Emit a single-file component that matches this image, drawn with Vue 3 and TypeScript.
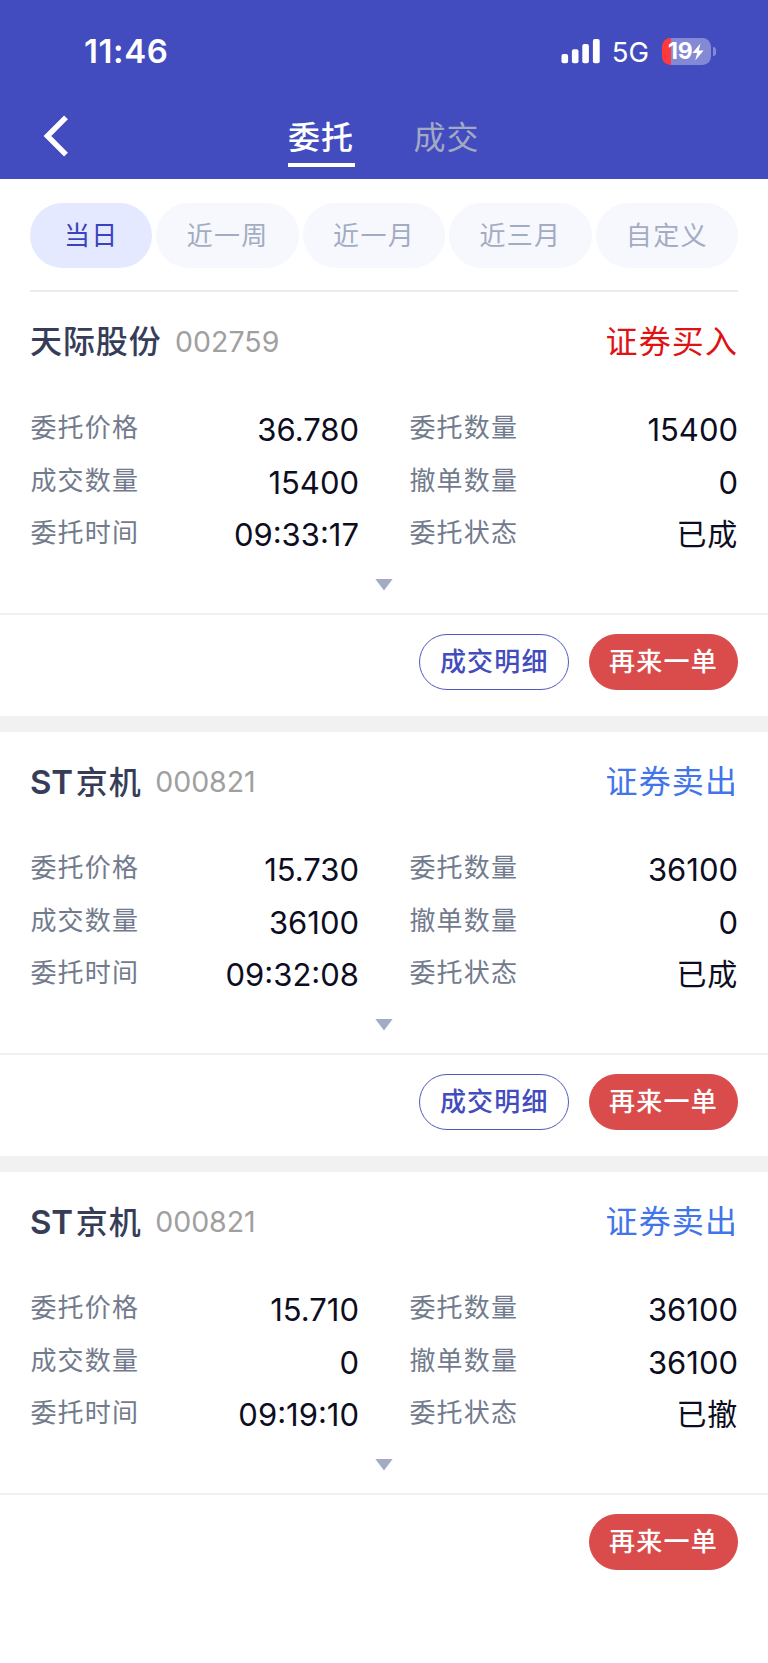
<script setup lang="ts">
interface Field {
  label: string
  value: string
}

interface Order {
  prefix: string
  name: string
  code: string
  side: 'buy' | 'sell'
  sideText: string
  fields: Field[]
  hasDetail: boolean
}

const ranges: string[] = ['当日', '近一周', '近一月', '近三月', '自定义']

function fields(price: string, amount: string, filled: string, cancelled: string, time: string, status: string): Field[] {
  return [
    { label: '委托价格', value: price },
    { label: '委托数量', value: amount },
    { label: '成交数量', value: filled },
    { label: '撤单数量', value: cancelled },
    { label: '委托时间', value: time },
    { label: '委托状态', value: status },
  ]
}

const orders: Order[] = [
  {
    prefix: '',
    name: '天际股份',
    code: '002759',
    side: 'buy',
    sideText: '证券买入',
    fields: fields('36.780', '15400', '15400', '0', '09:33:17', '已成'),
    hasDetail: true,
  },
  {
    prefix: 'ST',
    name: '京机',
    code: '000821',
    side: 'sell',
    sideText: '证券卖出',
    fields: fields('15.730', '36100', '36100', '0', '09:32:08', '已成'),
    hasDetail: true,
  },
  {
    prefix: 'ST',
    name: '京机',
    code: '000821',
    side: 'sell',
    sideText: '证券卖出',
    fields: fields('15.710', '36100', '0', '36100', '09:19:10', '已撤'),
    hasDetail: false,
  },
]
</script>

<template>
  <div class="page">
    <header class="top">
      <div class="status">
        <span class="clock">11:46</span>
        <div class="indicators">
          <svg class="signal" width="39" height="25" viewBox="0 0 39 25" fill="#fff">
            <rect x="0.5" y="15" width="6.6" height="9.3" rx="2" />
            <rect x="10.9" y="10.3" width="6.6" height="14" rx="2" />
            <rect x="21.3" y="5" width="6.6" height="19.3" rx="2" />
            <rect x="31.9" y="0" width="6.8" height="24.3" rx="2" />
          </svg>
          <span class="network">5G</span>
          <div class="battery">
            <div class="cell">
              <span class="level">19</span>
              <svg class="bolt" width="12" height="18" viewBox="0 0 12 18" fill="#fff">
                <path d="M8.5 0.5 L0.4 10 L5.2 10 L3.2 17.5 L11.6 7.6 L6.7 7.6 Z" />
              </svg>
            </div>
            <i class="cap"></i>
          </div>
        </div>
      </div>
      <nav class="nav">
        <svg class="back" width="26" height="42" viewBox="0 0 26 42" fill="none" stroke="#fff" stroke-width="5.4">
          <path d="M23 2.4 L4.4 21 L23 39.6" />
        </svg>
        <div class="tabs">
          <span class="tab active">委托</span>
          <span class="tab">成交</span>
        </div>
      </nav>
    </header>

    <div class="ranges">
      <span v-for="(r, i) in ranges" :key="r" class="range" :class="{ on: i === 0 }">{{ r }}</span>
    </div>

    <section v-for="(o, i) in orders" :key="i" class="order">
      <div class="head">
        <span class="name"><b v-if="o.prefix" class="prefix">{{ o.prefix }}</b>{{ o.name }}</span>
        <span class="code">{{ o.code }}</span>
        <span class="side" :class="o.side">{{ o.sideText }}</span>
      </div>
      <div class="grid">
        <div v-for="f in o.fields" :key="f.label" class="field">
          <span class="label">{{ f.label }}</span>
          <span class="value" :class="{ text: f.label === '委托状态' }">{{ f.value }}</span>
        </div>
      </div>
      <div class="more">
        <svg width="18" height="12" viewBox="0 0 18 12"><path d="M0.3 0 H17.7 L9 11.6 Z" fill="#a2acc2" /></svg>
      </div>
      <div class="actions">
        <button v-if="o.hasDetail" class="btn outline">成交明细</button>
        <button class="btn solid">再来一单</button>
      </div>
    </section>
  </div>
</template>

<style>
body {
  margin: 0;
  background: #fff;
}
</style>

<style scoped>
.page {
  width: 768px;
  height: 1663px;
  overflow: hidden;
  background: #fff;
  font-family: Inter, "Noto Sans CJK SC", sans-serif;
}
.top {
  height: 179px;
  background: #434cbe;
  color: #fff;
  box-sizing: border-box;
  padding-top: 30px;
}
.status {
  height: 43px;
  display: flex;
  justify-content: space-between;
  align-items: center;
  padding: 0 52px 0 84px;
}
.clock {
  font-size: 33px;
  font-weight: 600;
  line-height: 43px;
  letter-spacing: 0.6px;
}
.indicators {
  display: flex;
  align-items: center;
}
.network {
  font-size: 27.5px;
  line-height: 43px;
  margin: 2px 0 0 12px;
}
.battery {
  display: flex;
  align-items: center;
  gap: 2px;
  margin-left: 13px;
}
.cell {
  width: 49px;
  height: 27px;
  border-radius: 8.5px;
  background: linear-gradient(90deg, #ff393c 9.5px, #8489d5 9.5px);
  display: flex;
  align-items: center;
  padding-left: 6px;
  box-sizing: border-box;
}
.level {
  font-size: 23px;
  font-weight: 700;
  line-height: 27px;
  letter-spacing: -0.2px;
}
.bolt {
  flex: none;
}
.cap {
  width: 3px;
  height: 9px;
  border-radius: 0 4px 4px 0;
  background: #8489d5;
}
.nav {
  height: 106px;
  display: grid;
  grid-template-columns: 287.5px 1fr;
}
.back {
  margin: 42px 0 0 43px;
}
.tabs {
  display: flex;
  gap: 58.5px;
  padding-top: 42px;
}
.tab {
  height: 52px;
  width: 67px;
  box-sizing: border-box;
  font-size: 32px;
  letter-spacing: 1px;
  line-height: 46px;
  text-align: center;
  white-space: nowrap;
  color: #a2a9c4;
}
.tab.active {
  color: #fff;
  font-weight: 500;
  border-bottom: 4px solid #fff;
}
.ranges {
  display: flex;
  gap: 4px;
  margin: 0 30px;
  padding: 24px 0 22px;
  border-bottom: 2px solid #ececec;
}
.range {
  flex: 142.4 1 0;
  height: 65px;
  line-height: 66px;
  border-radius: 32.5px;
  text-align: center;
  font-size: 26px;
  letter-spacing: 1.3px;
  color: #a2acc2;
  background: #f7f8fd;
}
.range.on {
  flex-grow: 122.5;
  color: #3a43bd;
  background: #e5e9ff;
}
.order {
  height: 424px;
  border-bottom: 16px solid #f1f1f1;
}
.order:last-child {
  border-bottom: 0;
}
.head {
  height: 100px;
  padding: 0 30px;
  display: flex;
  align-items: center;
  line-height: 44px;
}
.name {
  font-size: 32px;
  font-weight: 500;
  letter-spacing: 0.9px;
  color: #363d59;
}
.prefix {
  font-weight: 600;
  font-size: 33px;
  letter-spacing: -0.2px;
  margin-right: 3px;
}
.code {
  font-size: 28.5px;
  font-weight: 400;
  letter-spacing: 0;
  color: #a0a0a0;
  margin-left: 13.5px;
}
.side {
  margin-left: auto;
  font-size: 32px;
  letter-spacing: 1.1px;
}
.buy {
  color: #df1214;
}
.sell {
  color: #4275e9;
}
.grid {
  display: grid;
  grid-template-columns: 329px 329px;
  column-gap: 50px;
  padding: 9px 30px 0;
  height: 158px;
  grid-auto-rows: 52.7px;
}
.field {
  display: flex;
  justify-content: space-between;
}
.label {
  font-size: 26px;
  line-height: 54px;
  letter-spacing: 1.2px;
  padding-left: 0.4px;
  color: #727b8d;
}
.value {
  font-size: 31px;
  line-height: 57.6px;
  color: #0d0d22;
}
.value.text {
  font-size: 30px;
  letter-spacing: 0.8px;
}
.more {
  height: 34px;
  padding-top: 20px;
  display: flex;
  justify-content: center;
}
.actions {
  border-top: 2px solid #f1f1f1;
  height: 101px;
  display: flex;
  justify-content: flex-end;
  gap: 19.5px;
  padding: 19px 29.7px 0 30px;
  box-sizing: border-box;
}
.btn {
  width: 149.7px;
  height: 56px;
  border-radius: 28px;
  box-sizing: border-box;
  padding: 0;
  font-family: inherit;
  font-size: 26px;
  font-weight: 500;
  letter-spacing: 1.2px;
  line-height: 54px;
}
.outline {
  border: 1px solid #5159c4;
  background: #fff;
  color: #434cbe;
}
.solid {
  border: 1px solid #da4b4b;
  background: #da4b4b;
  color: #fff;
}
</style>
